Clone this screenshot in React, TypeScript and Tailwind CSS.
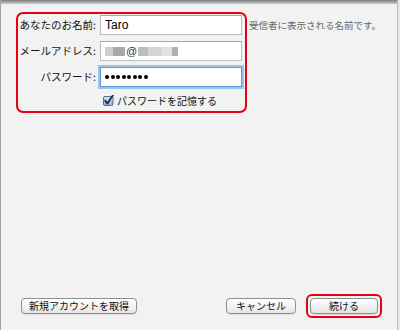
import React from "react";

const jp = { fontFamily: '"Noto Sans CJK JP", "Noto Sans", sans-serif' };

function Field({ children, focused }: { children: React.ReactNode; focused?: boolean }) {
  return (
    <div
      className={
        "h-[20px] bg-white flex items-center pl-[4px] text-[12px] text-black " +
        (focused
          ? "border border-[#5f9ad3] shadow-[0_0_0_2px_#9cc5ec]"
          : "border border-[#bdbdbd] border-t-[#a9a9a9]")
      }
    >
      {children}
    </div>
  );
}

function Label({ children }: { children: React.ReactNode }) {
  return (
    <div className="h-[20px] flex items-center justify-end whitespace-nowrap text-[10.5px] text-[#111] pr-[1px]">
      {children}
    </div>
  );
}

function MacButton({ children, w }: { children: React.ReactNode; w: string }) {
  return (
    <div
      className={
        w +
        " h-[16px] rounded-[4px] border border-[#8f8f8f] bg-gradient-to-b from-white to-[#e6e6e6] flex items-center justify-center whitespace-nowrap text-[10px] text-[#111] leading-none shadow-[0_1px_0_rgba(0,0,0,0.08)]"
      }
    >
      {children}
    </div>
  );
}

export default function App() {
  return (
    <div className="w-[400px] h-[330px] bg-[#e6e6e6] overflow-hidden" style={jp}>
      <div className="w-[398px] h-[330px] bg-[#f2f2f2] border-l border-[#a3a3a3] border-r border-r-[#b9b9b9] flex flex-col">
        <div className="h-[4px] bg-gradient-to-b from-[#7d7d7d] to-[#cfcfcf]" />
        <div className="flex items-start mt-[8px] ml-[15px]">
          <div className="w-[231px] h-[101px] border-2 border-[#e60012] rounded-[7px] pt-[1px]">
            <div className="grid grid-cols-[79px_142px] gap-x-[3px] gap-y-[6px]">
              <Label>あなたのお名前:</Label>
              <Field>
                <span style={{ fontFamily: '"Liberation Sans", sans-serif' }}>Taro</span>
              </Field>
              <Label>メールアドレス:</Label>
              <Field>
                <div className="flex items-center">
                  <span className="w-[8px] h-[9px] bg-[#cfcfcf] blur-[0.5px]" />
                  <span className="w-[12px] h-[9px] bg-[#a9a9a9] blur-[0.5px]" />
                  <span className="text-[11px] text-[#333] mx-[1px]" style={{ fontFamily: '"Liberation Sans", sans-serif' }}>@</span>
                  <span className="w-[10px] h-[9px] bg-[#bdbdbd] blur-[0.5px]" />
                  <span className="w-[14px] h-[9px] bg-[#d6d6d6] blur-[0.5px]" />
                  <span className="w-[10px] h-[9px] bg-[#e3e3e3] blur-[0.5px]" />
                  <span className="w-[6px] h-[9px] bg-[#b0b0b0] blur-[0.5px]" />
                </div>
              </Field>
              <Label>パスワード:</Label>
              <Field focused>
                <div className="flex items-center gap-[1.5px]">
                  {Array.from({ length: 8 }).map((_, i) => (
                    <span key={i} className="w-[4px] h-[4px] rounded-full bg-black" />
                  ))}
                </div>
              </Field>
              <div />
              <div className="flex items-center h-[14px] ml-[3px] gap-[3px]">
                <svg width="11" height="11" viewBox="0 0 11 11">
                  <defs>
                    <linearGradient id="cb" x1="0" y1="0" x2="0" y2="1">
                      <stop offset="0" stopColor="#d9e6f5" />
                      <stop offset="1" stopColor="#8fb0d8" />
                    </linearGradient>
                  </defs>
                  <rect x="0.5" y="1.5" width="9.5" height="9" rx="1.5" fill="url(#cb)" stroke="#5b6f8c" />
                  <path d="M2.3 5.8 L4.4 8.6 L9.8 0.6" fill="none" stroke="#1d2a45" strokeWidth="1.8" strokeLinecap="round" strokeLinejoin="round" />
                </svg>
                <span className="text-[10px] text-[#111] whitespace-nowrap">パスワードを記憶する</span>
              </div>
            </div>
          </div>
          <div className="ml-[2px] mt-[6px] text-[9.5px] text-[#666] leading-[14px] whitespace-nowrap">受信者に表示される名前です。</div>
        </div>
        <div className="mt-auto mb-[12px] flex items-center justify-between pl-[20px] pr-[15px]">
          <MacButton w="w-[116px]">新規アカウントを取得</MacButton>
          <div className="flex items-center gap-[10px]">
            <MacButton w="w-[70px]">キャンセル</MacButton>
            <div className="border-2 border-[#e60012] rounded-[6px] p-[2px]">
              <MacButton w="w-[68px]">続ける</MacButton>
            </div>
          </div>
        </div>
      </div>
    </div>
  );
}
